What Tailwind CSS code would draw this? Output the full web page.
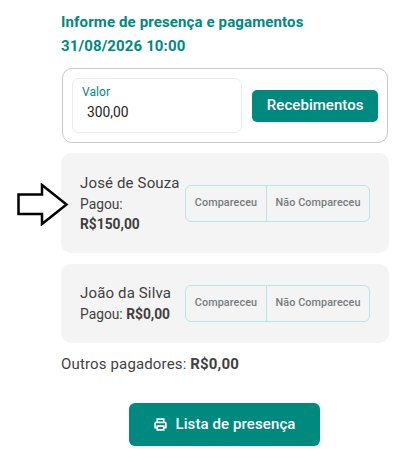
<!DOCTYPE html>
<html lang="pt-BR">
<head>
<meta charset="utf-8">
<title>Informe de presença</title>
<script src="https://cdn.jsdelivr.net/npm/@tailwindcss/browser@4"></script>
</head>
<body class="bg-white font-['Roboto',sans-serif] overflow-hidden">
  <div class="relative w-[410px] h-[464px] pl-[61px] pr-[21px] pt-[10px]">
    <h1 class="text-[15px] leading-[24px] font-bold text-[#00897f] tracking-[0.13px]">Informe de presença e pagamentos<br>31/08/2026 10:00</h1>

    <div class="mt-[10px] ml-px mr-px h-[75px] flex items-center gap-[10px] px-[9px] rounded-[10px] border border-[#c8c8c8]">
      <div class="w-[171px] h-[55px] rounded-[7px] border border-[#e9ecef] pl-[9px] pt-[5px]">
        <div class="text-[12px] leading-[16px] text-[#00897f] tracking-[0.1px]">Valor</div>
        <div class="text-[13.8px] leading-[20px] mt-[2px] ml-[5px] text-[#212121]">300,00</div>
      </div>
      <button type="button" class="w-[126px] h-[32px] rounded-[5px] bg-[#00897f] text-white text-[15px] font-medium tracking-[0.05px]">Recebimentos</button>
    </div>

    <div class="mt-[10px] h-[100px] flex items-center justify-between pl-[19px] pr-[19px] rounded-[10px] bg-[#f4f4f4]">
      <div class="w-[105px] text-[#3f3f3f]">
        <div class="text-[15px] leading-[20px] tracking-[0.15px]">José de Souza</div>
        <div class="text-[13.8px] leading-[20px] mt-px">Pagou:<br><b class="font-bold">R$150,00</b></div>
      </div>
      <div class="flex h-[37px] w-[185px] rounded-[6px] border border-[#b5e6e6] text-[10.8px] font-medium text-[#757b80] tracking-[0.1px]">
        <div class="w-[81px] flex items-center justify-center border-r border-[#b5e6e6]">Compareceu</div>
        <div class="flex-1 flex items-center justify-center">Não Compareceu</div>
      </div>
    </div>

    <div class="mt-[11px] h-[79px] flex items-center justify-between pl-[19px] pr-[19px] rounded-[10px] bg-[#f4f4f4]">
      <div class="w-[105px] text-[#3f3f3f]">
        <div class="text-[15px] leading-[20px] tracking-[0.15px]">João da Silva</div>
        <div class="text-[13.8px] leading-[20px] mt-px">Pagou: <b class="font-bold">R$0,00</b></div>
      </div>
      <div class="flex h-[37px] w-[185px] rounded-[6px] border border-[#b5e6e6] text-[10.8px] font-medium text-[#757b80] tracking-[0.1px]">
        <div class="w-[81px] flex items-center justify-center border-r border-[#b5e6e6]">Compareceu</div>
        <div class="flex-1 flex items-center justify-center">Não Compareceu</div>
      </div>
    </div>

    <div class="mt-[11px] text-[15px] leading-[20px] text-[#3f3f3f] tracking-[0.15px]">Outros pagadores: <b class="font-bold">R$0,00</b></div>

    <div class="mt-[29px] flex justify-center pr-[2px]">
      <button type="button" class="w-[191px] h-[43px] pl-[2px] rounded-[6px] bg-[#00897f] text-white text-[15px] font-medium tracking-[0.1px] flex items-center justify-center gap-[8px]">
        <svg class="w-[13px] h-[13px]" viewBox="0 0 12 12" fill="none" stroke="currentColor" stroke-width="1.5">
          <path d="M3 4V1h6v3"/>
          <path d="M3 9H1V5a1 1 0 0 1 1-1h8a1 1 0 0 1 1 1v4H9"/>
          <path d="M3 7.5h6V11H3z"/>
        </svg>
        Lista de presença
      </button>
    </div>

    <svg class="absolute left-[17px] top-[183px]" width="52" height="43" viewBox="0 0 52 43" fill="white" stroke="black" stroke-width="2.5">
      <path d="M1.5 11.5H25V2l24.5 19.5L25 41V31H1.5z"/>
    </svg>
  </div>
</body>
</html>
